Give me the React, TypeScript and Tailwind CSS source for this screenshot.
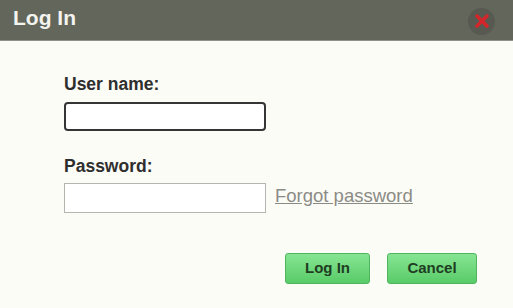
const App = () => {
    return (
        <div className="w-[513px] h-[308px] bg-[#fcfcf6] flex flex-col font-['Liberation_Sans',Arial,sans-serif]">
            {/* Title bar */}
            <div className="h-[41px] bg-[#62665b] border-b border-[#8f9188] flex items-center justify-between pl-[13px] pr-[18px]">
                <span className="text-[21px] font-bold text-[#f3f3ef] leading-none pb-[6px]">Log In</span>
                <div className="w-[27px] h-[27px] mt-[2px] rounded-full bg-[#585a52] flex items-center justify-center">
                    <svg width="16" height="16" viewBox="0 0 16 16">
                        <path d="M3 3 L13 13 M13 3 L3 13" stroke="#d3262b" strokeWidth="3.6" strokeLinecap="round" />
                    </svg>
                </div>
            </div>

            {/* Form */}
            <div className="flex flex-col pl-[64px] pt-[35px]">
                <label className="text-[17.5px] font-bold text-[#2e2e2e] leading-none">User name:</label>
                <input
                    type="text"
                    className="mt-[8px] w-[202px] h-[29px] border-2 border-[#353535] rounded-[4px] bg-white outline-none"
                />

                <label className="mt-[27px] text-[17.5px] font-bold text-[#2e2e2e] leading-none">Password:</label>
                <div className="mt-[8px] flex items-center gap-[9px]">
                    <input
                        type="password"
                        className="w-[202px] h-[30px] border border-[#b5b5b0] bg-white outline-none"
                    />
                    <a href="#" className="text-[18.5px] leading-none text-[#8b8b86] underline -mt-[3px]">Forgot password</a>
                </div>
            </div>

            {/* Buttons */}
            <div className="flex justify-end gap-[17px] pr-[36px] mt-[40px]">
                <button className="w-[85px] h-[31px] rounded-[3px] border border-[#4fb65f] bg-gradient-to-b from-[#86e593] to-[#58cb68] text-[15px] font-bold text-[#1f3d22]">
                    Log In
                </button>
                <button className="w-[90px] h-[31px] rounded-[3px] border border-[#4fb65f] bg-gradient-to-b from-[#86e593] to-[#58cb68] text-[15px] font-bold text-[#1f3d22]">
                    Cancel
                </button>
            </div>
        </div>
    );
};

export default App;
